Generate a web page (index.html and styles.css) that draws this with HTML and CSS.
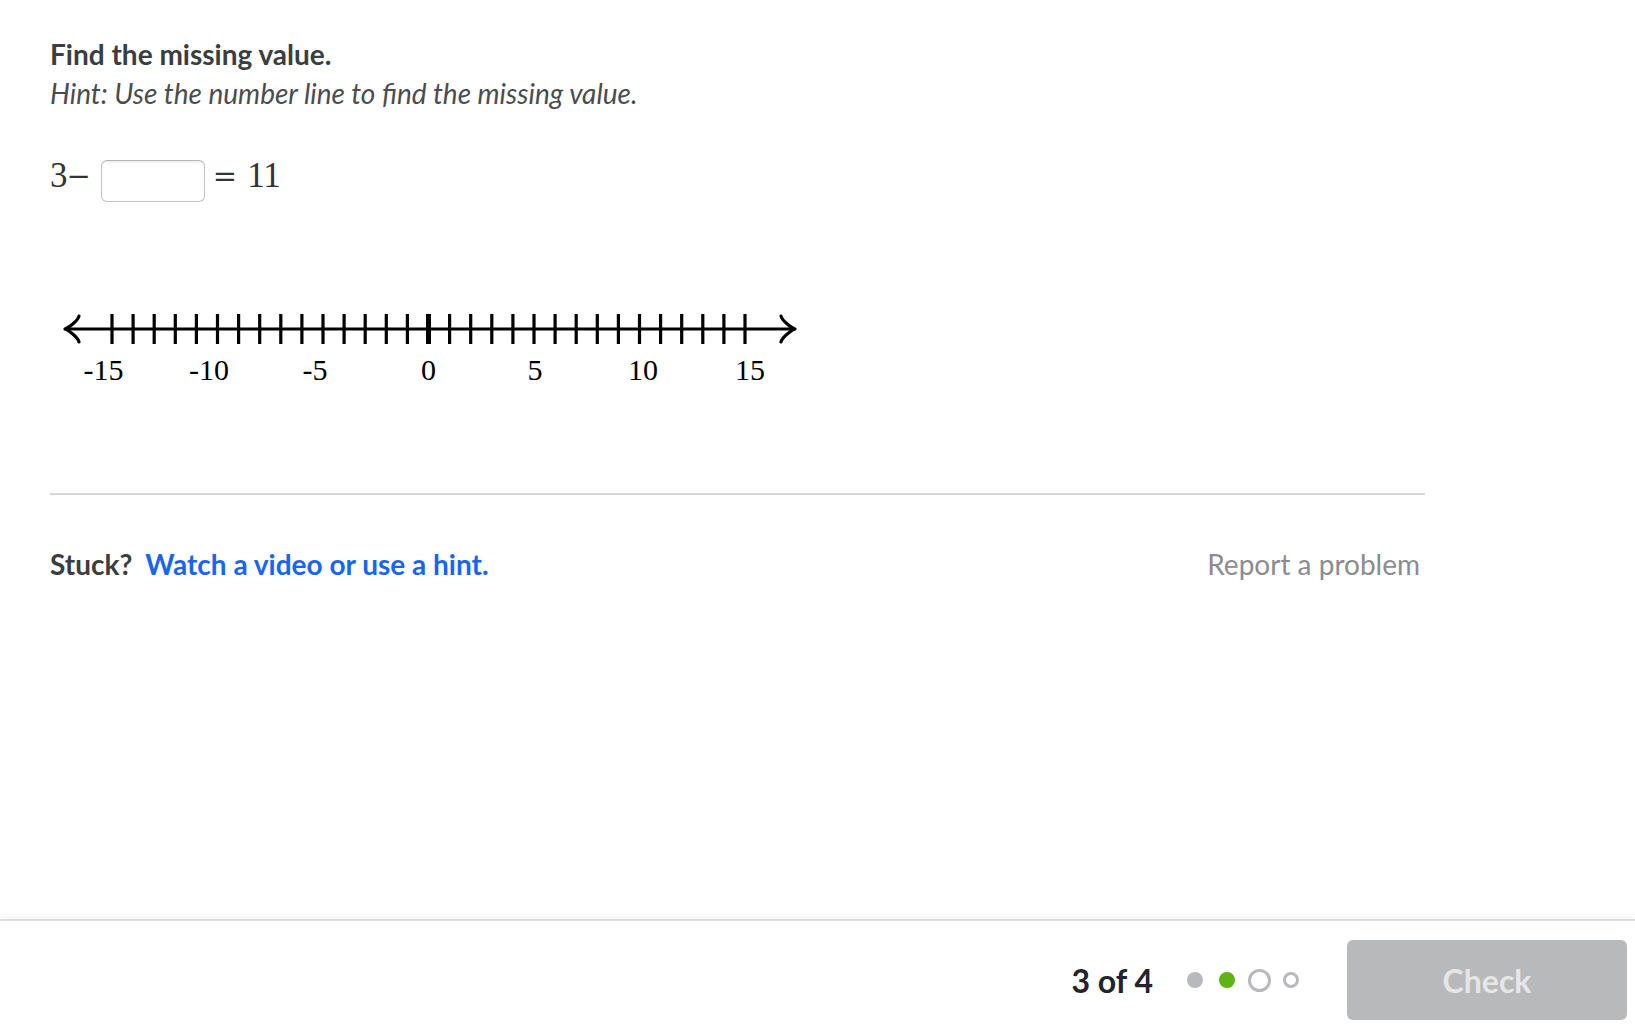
FILE: index.html
```html
<!DOCTYPE html>
<html lang="en">
<head>
<meta charset="utf-8">
<title>Find the missing value</title>
<link rel="stylesheet" href="styles.css">
</head>
<body>
<div class="page">
  <main class="content">
    <div class="question">
      <p class="title">Find the missing value.</p>
      <p class="hint">Hint: Use the number line to find the missing value.</p>
      <div class="equation">
        <span class="m m-num">3</span><span class="m m-op m-minus">−</span>
        <span class="blank"></span>
        <span class="m m-op m-eq">=</span>
        <span class="m m-num">11</span>
      </div>
      <svg class="numberline" width="760" height="100" viewBox="50 295 760 100" xmlns="http://www.w3.org/2000/svg">
        <g fill="none" stroke="#000" stroke-linecap="round" stroke-linejoin="round">
          <path d="M66 328 H793" stroke-width="3.2"/>
          <path d="M79 315 C78 320 68 327 65 328 C68 329 78 336 79 341" stroke-width="3.2"/>
          <path d="M781 315 C782 320 792 327 795 328 C792 329 782 336 781 341" stroke-width="3.2"/>
          <path stroke-width="3.2" stroke-linecap="butt" d="M112 313V343M133.1 313V343M154.2 313V343M175.3 313V343M196.4 313V343M217.5 313V343M238.6 313V343M259.7 313V343M280.8 313V343M301.9 313V343M323 313V343M344.1 313V343M365.2 313V343M386.3 313V343M407.4 313V343M449.6 313V343M470.7 313V343M491.8 313V343M512.9 313V343M534 313V343M555.1 313V343M576.2 313V343M597.3 313V343M618.4 313V343M639.5 313V343M660.6 313V343M681.7 313V343M702.8 313V343M723.9 313V343M745 313V343"/>
          <path stroke-width="5" stroke-linecap="butt" d="M428.5 313V343"/>
        </g>
        <g class="nl-labels" text-anchor="middle">
          <text x="103.5" y="379">-15</text>
          <text x="209" y="379">-10</text>
          <text x="315" y="379">-5</text>
          <text x="428.5" y="379">0</text>
          <text x="535" y="379">5</text>
          <text x="643" y="379">10</text>
          <text x="750" y="379">15</text>
        </g>
      </svg>
    </div>
    <hr class="divider">
    <div class="help-row">
      <p class="stuck"><span class="stuck-label">Stuck?</span><a class="stuck-link" href="#">Watch a video or use a hint.</a></p>
      <a class="report" href="#">Report a problem</a>
    </div>
  </main>
  <footer class="footer">
    <span class="progress-text">3 of 4</span>
    <div class="dots">
      <span class="dot-slot"><span class="dot dot-done"></span></span>
      <span class="dot-slot"><span class="dot dot-correct"></span></span>
      <span class="dot-slot"><span class="dot dot-current"></span></span>
      <span class="dot-slot"><span class="dot dot-todo"></span></span>
    </div>
    <button class="check" type="button">Check</button>
  </footer>
</div>
</body>
</html>
```

FILE: styles.css
```css
* {
  box-sizing: border-box;
}

html, body {
  margin: 0;
  padding: 0;
  background: #ffffff;
}

body {
  font-family: Lato, "Noto Sans", "Liberation Sans", sans-serif;
  color: #3b3d40;
}

.page {
  height: 100vh;
  display: flex;
  flex-direction: column;
  overflow: hidden;
}

.content {
  flex: 1;
  width: 1425px;
  padding: 35px 0 0 50px;
}

.question {
  display: flex;
  flex-direction: column;
  align-items: flex-start;
}

.title {
  margin: 0;
  font-size: 28px;
  line-height: 39px;
  font-weight: 700;
  color: #3b3d40;
}

.hint {
  margin: 0;
  font-size: 28px;
  line-height: 39px;
  font-style: italic;
  color: #4a4c4f;
}

.equation {
  margin-top: 47px;
  height: 42px;
  display: flex;
  align-items: center;
}

.m {
  font-family: "Liberation Serif", "DejaVu Serif", serif;
  font-size: 35px;
  line-height: 32px;
  padding-bottom: 10px;
  color: #333333;
}

.m-op {
  font-family: "DejaVu Serif", "Liberation Serif", serif;
  font-size: 29px;
  font-weight: 400;
}

.m-minus {
  margin-left: -1px;
  margin-right: 10px;
}

.m-eq {
  margin-left: 8px;
  margin-right: 10px;
}

.blank {
  display: block;
  width: 104px;
  height: 42px;
  border: 1.5px solid #c4c4c4;
  border-top-color: #b4b4b4;
  border-radius: 6px;
  box-shadow: inset 0 2px 2px rgba(0, 0, 0, 0.06);
  background: #fff;
}

.numberline {
  display: block;
  margin-top: 94px;
  margin-left: 0;
}

.nl-labels {
  font-family: "Liberation Serif", "DejaVu Serif", serif;
  font-size: 30px;
  fill: #000;
}

.divider {
  margin: 97px 0 0 0;
  height: 2px;
  border: 0;
  background: #d6d6d6;
  width: 1375px;
}

.help-row {
  width: 1375px;
  margin-top: 50px;
  padding-right: 5px;
  display: flex;
  justify-content: space-between;
  align-items: baseline;
  font-size: 28px;
  line-height: 39px;
}

.stuck {
  margin: 0;
}

.stuck-label {
  font-weight: 700;
  color: #3b3d40;
  margin-right: 13px;
}

.stuck-link {
  font-weight: 700;
  color: #1865f2;
  text-decoration: none;
}

.report {
  color: #8a8c8f;
  text-decoration: none;
}

.footer {
  height: 111px;
  border-top: 2px solid #dcdcdc;
  box-shadow: 0 -3px 5px rgba(0, 0, 0, 0.03);
  padding: 19px 8px 10px 0;
  display: flex;
  justify-content: flex-end;
  align-items: center;
}

.progress-text {
  font-size: 32px;
  font-weight: 700;
  color: #21242c;
  margin-right: 26px;
}

.dots {
  display: flex;
  align-items: center;
  margin-right: 40px;
}

.dot-slot {
  width: 32px;
  height: 32px;
  display: flex;
  align-items: center;
  justify-content: center;
}

.dot {
  display: block;
  border-radius: 50%;
}

.dot-done {
  width: 16px;
  height: 16px;
  background: #b8b9bc;
}

.dot-correct {
  width: 16px;
  height: 16px;
  background: #5fb312;
}

.dot-current {
  width: 23px;
  height: 23px;
  border: 3px solid #b8b9bc;
  background: #fff;
}

.dot-todo {
  width: 16px;
  height: 16px;
  border: 3px solid #b8b9bc;
  background: #fff;
}

.check {
  width: 280px;
  height: 80px;
  border: 0;
  border-radius: 6px;
  background: #b8b9bb;
  color: #e6e6e7;
  font-family: Lato, "Noto Sans", "Liberation Sans", sans-serif;
  font-size: 32px;
  font-weight: 700;
  padding: 0;
}
```
